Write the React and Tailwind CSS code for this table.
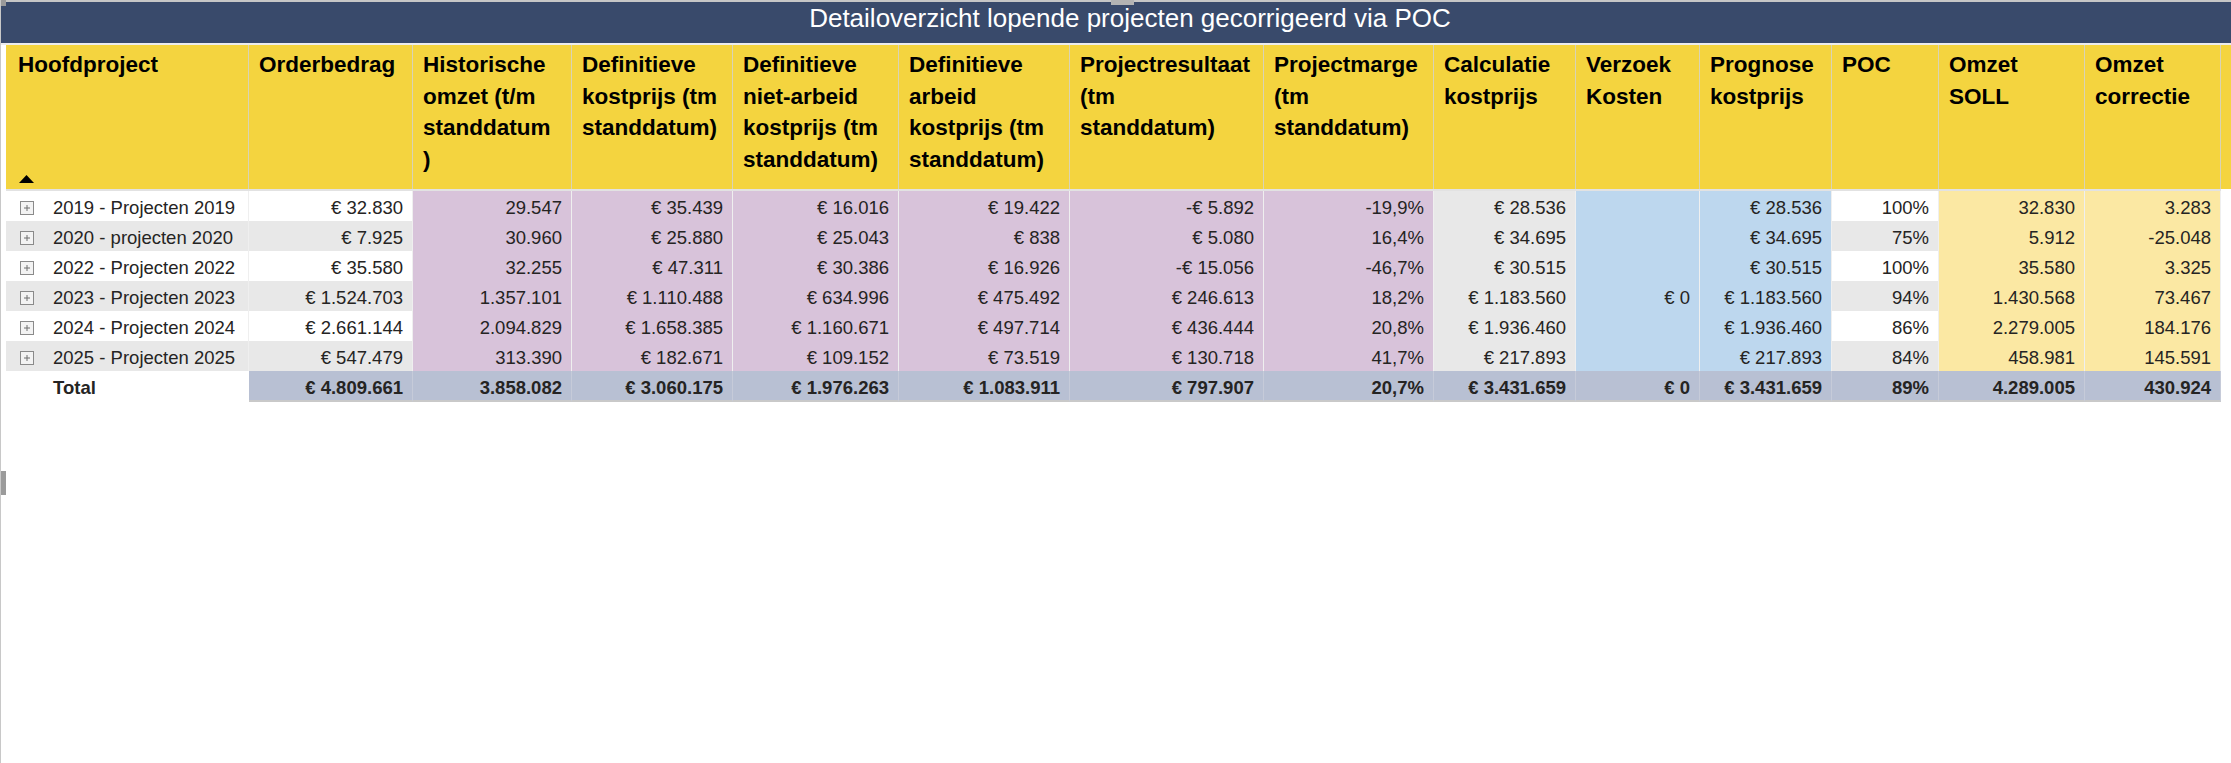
import React from 'react'

const gridCols = 'grid grid-cols-[243px_164px_159px_161px_166px_171px_194px_170px_142px_124px_132px_107px_146px_136px]'

const headers = [
    ['Hoofdproject'],
    ['Orderbedrag'],
    ['Historische', 'omzet (t/m', 'standdatum', ')'],
    ['Definitieve', 'kostprijs (tm', 'standdatum)'],
    ['Definitieve', 'niet-arbeid', 'kostprijs (tm', 'standdatum)'],
    ['Definitieve', 'arbeid', 'kostprijs (tm', 'standdatum)'],
    ['Projectresultaat', '(tm', 'standdatum)'],
    ['Projectmarge', '(tm', 'standdatum)'],
    ['Calculatie', 'kostprijs'],
    ['Verzoek', 'Kosten'],
    ['Prognose', 'kostprijs'],
    ['POC'],
    ['Omzet', 'SOLL'],
    ['Omzet', 'correctie'],
]

const rows = [
    ['2019 - Projecten 2019', '€ 32.830', '29.547', '€ 35.439', '€ 16.016', '€ 19.422', '-€ 5.892', '-19,9%', '€ 28.536', '', '€ 28.536', '100%', '32.830', '3.283'],
    ['2020 - projecten 2020', '€ 7.925', '30.960', '€ 25.880', '€ 25.043', '€ 838', '€ 5.080', '16,4%', '€ 34.695', '', '€ 34.695', '75%', '5.912', '-25.048'],
    ['2022 - Projecten 2022', '€ 35.580', '32.255', '€ 47.311', '€ 30.386', '€ 16.926', '-€ 15.056', '-46,7%', '€ 30.515', '', '€ 30.515', '100%', '35.580', '3.325'],
    ['2023 - Projecten 2023', '€ 1.524.703', '1.357.101', '€ 1.110.488', '€ 634.996', '€ 475.492', '€ 246.613', '18,2%', '€ 1.183.560', '€ 0', '€ 1.183.560', '94%', '1.430.568', '73.467'],
    ['2024 - Projecten 2024', '€ 2.661.144', '2.094.829', '€ 1.658.385', '€ 1.160.671', '€ 497.714', '€ 436.444', '20,8%', '€ 1.936.460', '', '€ 1.936.460', '86%', '2.279.005', '184.176'],
    ['2025 - Projecten 2025', '€ 547.479', '313.390', '€ 182.671', '€ 109.152', '€ 73.519', '€ 130.718', '41,7%', '€ 217.893', '', '€ 217.893', '84%', '458.981', '145.591'],
]

const totals = ['Total', '€ 4.809.661', '3.858.082', '€ 3.060.175', '€ 1.976.263', '€ 1.083.911', '€ 797.907', '20,7%', '€ 3.431.659', '€ 0', '€ 3.431.659', '89%', '4.289.005', '430.924']

const cellBg = (c, r) => {
    if (c >= 2 && c <= 7) return 'bg-[#d8c3da]'
    if (c === 8) return 'bg-[#e8e8e8]'
    if (c === 9 || c === 10) return 'bg-[#bdd7ee]'
    if (c >= 12) return 'bg-[#fbe8a3]'
    return r % 2 ? 'bg-[#e8e8e8]' : 'bg-white'
}

const ExpandIcon = () => (
    <svg width="14" height="14" viewBox="0 0 14 14" className="shrink-0">
        <rect x="0.5" y="0.5" width="13" height="13" fill="#f3f3f3" stroke="#8a8a8a" />
        <path d="M4 7h6M7 4v6" stroke="#6e6e6e" strokeWidth="1" />
    </svg>
)

const SortUp = () => (
    <svg width="15" height="8" viewBox="0 0 15 8">
        <polygon points="0,8 7.5,0 15,8" fill="#000" />
    </svg>
)

const App = () => {
    return (
        <div className="relative w-[2231px] h-[763px] bg-white overflow-hidden border-l border-[#c8c8c8] font-['Liberation_Sans',Arial,sans-serif]">
            <div className="h-[2px] bg-[#c6c6c6]" />

            {/* title */}
            <div className="h-[41px] bg-[#394a6b] text-white text-[26px] leading-[33px] text-center pl-[28px]">
                Detailoverzicht lopende projecten gecorrigeerd via POC
            </div>
            <div className="h-[2px] bg-[#ececec]" />

            <div className="pl-[5px]">
                {/* header */}
                <div className={`${gridCols} h-[144px] bg-[#f4d43f] text-black text-[22.5px] font-bold leading-[31.5px]`}>
                    {headers.map((lines, i) => (
                        i === 0 ? (
                            <div key={i} className="flex flex-col justify-between pl-[12px] pt-[4px] pb-[6px] border-r border-[#d9d3b5]">
                                <div className="whitespace-nowrap">{lines[0]}</div>
                                <div className="pl-[1px]"><SortUp /></div>
                            </div>
                        ) : (
                            <div key={i} className="px-[10px] pt-[4px] border-r border-[#d9d3b5]">
                                {lines.map(l => (
                                    <div key={l} className="whitespace-nowrap">{l}</div>
                                ))}
                            </div>
                        )
                    ))}
                </div>
                <div className="h-[2px] w-[2215px] bg-[#e2e2e2]" />

                {/* rows */}
                {rows.map((row, r) => (
                    <div key={r} className={`${gridCols} h-[30px] text-[18.5px] text-[#252423]`}>
                        {row.map((v, c) => (
                            c === 0 ? (
                                <div key={c} className={`${cellBg(c, r)} flex items-center pl-[14px] pt-[4px] border-r border-b border-[#efefef]`}>
                                    <ExpandIcon />
                                    <span className="ml-[19px] leading-[26px] whitespace-nowrap">{v}</span>
                                </div>
                            ) : (
                                <div key={c} className={`${cellBg(c, r)} text-right pr-[9px] pt-[4px] leading-[26px] whitespace-nowrap border-r border-b border-[#efefef]`}>
                                    {v}
                                </div>
                            )
                        ))}
                    </div>
                ))}

                {/* total */}
                <div className={`${gridCols} h-[30px] text-[18.5px] font-bold text-[#252423]`}>
                    {totals.map((v, c) => (
                        c === 0 ? (
                            <div key={c} className="bg-white pl-[47px] pt-[4px] leading-[26px]">{v}</div>
                        ) : (
                            <div key={c} className="bg-[#b8c0d3] text-right pr-[9px] pt-[4px] leading-[25px] whitespace-nowrap border-r border-b-2 border-r-[#c6cbd9] border-b-[#c9c9c9]">
                                {v}
                            </div>
                        )
                    ))}
                </div>
            </div>

            {/* frame handles */}
            <div className="absolute left-0 top-0 w-[5px] h-[6px] bg-[#9a9a9a]" />
            <div className="absolute left-[1110px] top-0 w-[23px] h-[5px] bg-[#b3b3b3]" />
            <div className="absolute left-0 top-[471px] w-[5px] h-[24px] bg-[#9b9b9b]" />
        </div>
    )
}

export default App
